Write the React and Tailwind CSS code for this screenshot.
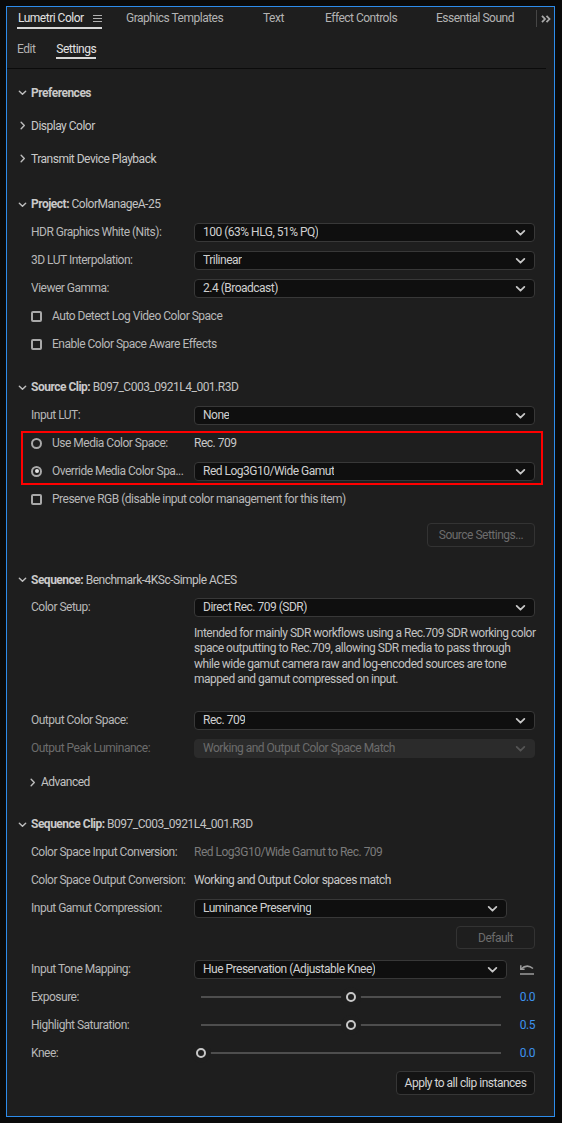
import React from 'react';

const Chevron = ({ dir = 'down', className = '' }) => (
  <svg
    viewBox="0 0 10 10"
    className={className}
    fill="none"
    stroke="currentColor"
    strokeWidth="1.6"
    strokeLinecap="round"
    strokeLinejoin="round"
  >
    {dir === 'down' ? <path d="M1.5 3.5 L5 7 L8.5 3.5" /> : <path d="M3.5 1.5 L7 5 L3.5 8.5" />}
  </svg>
);

function Select({ value, disabled, className = 'flex-1' }) {
  return (
    <div
      className={`${className} flex h-[19px] items-center justify-between rounded-[4px] border pl-[8px] pr-[8px] ${
        disabled ? 'border-[#2b2b2b] bg-[#2b2b2b] text-[#6b6b6b]' : 'border-[#383838] bg-[#0f0f0f] text-[#cfcfcf]'
      }`}
    >
      <span className="truncate">{value}</span>
      <Chevron className={`h-[11px] w-[11px] ${disabled ? 'text-[#555]' : 'text-[#c8c8c8]'}`} />
    </div>
  );
}

function Header({ title, value, open = true, h = 'h-[28px]', className = '' }) {
  return (
    <div className={`flex ${h} items-center ${className}`}>
      <Chevron dir={open ? 'down' : 'right'} className="h-[9px] w-[9px] text-[#bdbdbd]" />
      <span className="ml-[4px] text-[#c9c9c9]">
        <span className={value || open ? 'font-bold' : ''}>{title}</span>
        {value && <span className="text-[#c3c3c3]"> {value}</span>}
      </span>
    </div>
  );
}

function Row({ label, children, dim, h = 'h-[28px]', className = '' }) {
  return (
    <div className={`flex ${h} items-center pl-[13px] ${className}`}>
      <div className={`w-[163px] shrink-0 truncate ${dim ? 'text-[#6c6c6c]' : 'text-[#b8b8b8]'}`}>{label}</div>
      {children}
    </div>
  );
}

function Check({ label }) {
  return (
    <div className="flex h-[28px] items-center pl-[13px]">
      <div className="h-[11px] w-[11px] rounded-[2px] border-2 border-[#a9a9a9]" />
      <span className="ml-[10px] text-[#b8b8b8]">{label}</span>
    </div>
  );
}

function Slider({ label, pos, value }) {
  return (
    <Row label={label}>
      <div className="relative ml-[7px] h-[10px] w-[300px]">
        <div className="absolute left-0 right-0 top-[4px] h-[2px] bg-[#4e4e4e]" />
        <div
          className="absolute top-0 h-[10px] w-[10px] rounded-full border-2 border-[#c8c8c8] bg-[#1e1e1e] shadow-[0_0_0_5px_#1e1e1e]"
          style={{ left: `calc(${pos}% - 5px)` }}
        />
      </div>
      <div className="flex-1 text-right text-[#3d93ee]">{value}</div>
    </Row>
  );
}

export default function App() {
  return (
    <div className="h-[1123px] w-[562px] bg-[#0a0a0a] pl-[6px] pt-[6px] font-['Roboto',sans-serif] text-[12px] leading-[14px] tracking-[-0.5px]">
      <div className="flex h-[1111px] w-[549px] flex-col overflow-hidden border border-[#2d8ceb] bg-[#1e1e1e]">
        {/* panel tabs */}
        <div className="flex items-start pl-[10px] pr-[3px] text-[#b3b3b3]">
          <div className="flex w-[85px] items-center justify-between border-b-2 border-[#d8d8d8] pl-[1px] pt-[4px] pb-[2px] text-[#e2e2e2]">
            <span>Lumetri Color</span>
            <svg viewBox="0 0 9 8" className="h-[8px] w-[9px]" stroke="#b0b0b0" strokeWidth="1">
              <path d="M0 1.5 H9 M0 4.5 H9 M0 7.5 H9" />
            </svg>
          </div>
          <span className="ml-[24px] w-[137px] pt-[4px]">Graphics Templates</span>
          <span className="w-[62px] pt-[4px]">Text</span>
          <span className="w-[111px] pt-[4px]">Effect Controls</span>
          <span className="pt-[4px]">Essential Sound</span>
          <div className="ml-auto mt-[3px] flex items-center">
            <div className="h-[17px] w-px bg-[#464646]" />
            <svg viewBox="0 0 10 8" className="ml-[4px] h-[8px] w-[10px]" fill="none" stroke="#a8a8a8" strokeWidth="1.8">
              <path d="M1 0.8 L4 4 L1 7.2 M5.5 0.8 L8.5 4 L5.5 7.2" />
            </svg>
          </div>
        </div>
        <div className="flex items-start pl-[10px] pt-[13px] text-[#b3b3b3]">
          <span className="pb-[3px]">Edit</span>
          <span className="ml-[21px] border-b-2 border-[#d8d8d8] pb-[1px] text-[#e2e2e2]">Settings</span>
        </div>
        <div className="mr-[8px] mt-[9px] h-px shrink-0 bg-[#0b0b0b]" />

        {/* settings */}
        <div className="flex flex-col pl-[11px] pr-[19px] pt-[7px]">
          <Header title="Preferences" h="h-[33px]" />
          <Header title="Display Color" open={false} h="h-[33px]" />
          <Header title="Transmit Device Playback" open={false} h="h-[33px]" />

          <Header title="Project:" value="ColorManageA-25" className="mt-[15px]" />
          <Row label="HDR Graphics White (Nits):">
            <Select value="100 (63% HLG, 51% PQ)" />
          </Row>
          <Row label="3D LUT Interpolation:">
            <Select value="Trilinear" />
          </Row>
          <Row label="Viewer Gamma:">
            <Select value="2.4 (Broadcast)" />
          </Row>
          <Check label="Auto Detect Log Video Color Space" />
          <Check label="Enable Color Space Aware Effects" />

          <Header title="Source Clip:" value="B097_C003_0921L4_001.R3D" className="mt-[15px]" />
          <Row label="Input LUT:">
            <Select value="None" />
          </Row>
          <div className="ml-[3px] mr-[-8px] mt-[2px] border-2 border-[#ff0000] pl-[8px] pr-[6px]">
            <div className="flex h-[20px] items-center">
              <div className="h-[11px] w-[11px] rounded-full border-2 border-[#a9a9a9]" />
              <span className="ml-[10px] w-[142px] truncate text-[#b8b8b8]">Use Media Color Space:</span>
              <span className="text-[#c8c8c8]">Rec. 709</span>
            </div>
            <div className="flex h-[30px] items-center pt-[6px]">
              <div className="flex h-[11px] w-[11px] items-center justify-center rounded-full border-2 border-[#a9a9a9]">
                <div className="h-[4px] w-[4px] rounded-full bg-[#e4e4e4]" />
              </div>
              <span className="ml-[10px] w-[142px] whitespace-nowrap text-[#b8b8b8]">Override Media Color Spa...</span>
              <Select value="Red Log3G10/Wide Gamut" />
            </div>
          </div>
          <Check label="Preserve RGB (disable input color management for this item)" />
          <div className="mt-[10px] flex justify-end">
            <div className="flex h-[24px] w-[108px] items-center justify-center rounded-[4px] border border-[#333] text-[#6c6c6c]">
              Source Settings...
            </div>
          </div>

          <Header title="Sequence:" value="Benchmark-4KSc-Simple ACES" h="h-[27px]" className="mt-[19px]" />
          <Row label="Color Setup:">
            <Select value="Direct Rec. 709 (SDR)" />
          </Row>
          <div className="ml-[176px] mt-[5px] whitespace-nowrap leading-[15.3px] text-[#c2c2c2]">
            Intended for mainly SDR workflows using a Rec.709 SDR working color
            <br />
            space outputting to Rec.709, allowing SDR media to pass through
            <br />
            while wide gamut camera raw and log-encoded sources are tone
            <br />
            mapped and gamut compressed on input.
          </div>
          <Row label="Output Color Space:" className="mt-[19px]">
            <Select value="Rec. 709" />
          </Row>
          <Row label="Output Peak Luminance:" dim>
            <Select value="Working and Output Color Space Match" disabled />
          </Row>
          <div className="mt-[6px] flex h-[28px] items-center pl-[10px]">
            <Chevron dir="right" className="h-[9px] w-[9px] text-[#bdbdbd]" />
            <span className="ml-[4px] text-[#c3c3c3]">Advanced</span>
          </div>

          <Header title="Sequence Clip:" value="B097_C003_0921L4_001.R3D" className="mt-[14px]" />
          <Row label="Color Space Input Conversion:">
            <span className="text-[#7b7b7b]">Red Log3G10/Wide Gamut to Rec. 709</span>
          </Row>
          <Row label="Color Space Output Conversion:">
            <span className="text-[#c8c8c8]">Working and Output Color spaces match</span>
          </Row>
          <Row label="Input Gamut Compression:">
            <Select value="Luminance Preserving" className="w-[313px]" />
          </Row>
          <div className="mt-[4px] flex justify-end">
            <div className="flex h-[23px] w-[79px] items-center justify-center rounded-[4px] border border-[#333] text-[#6c6c6c]">
              Default
            </div>
          </div>
          <Row label="Input Tone Mapping:" className="mt-[6px]">
            <Select value="Hue Preservation (Adjustable Knee)" className="w-[313px]" />
            <svg viewBox="0 0 16 12" className="ml-auto h-[12px] w-[16px]" fill="none" stroke="#9c9c9c" strokeWidth="1.5">
              <path d="M2 6 Q8 0.5 14 5.5" />
              <path d="M1.8 2.2 V6.2 H5.6" />
              <path d="M1 11 H15" />
            </svg>
          </Row>
          <Slider label="Exposure:" pos={50} value="0.0" />
          <Slider label="Highlight Saturation:" pos={50} value="0.5" />
          <Slider label="Knee:" pos={0} value="0.0" />
          <div className="mt-[4px] flex justify-end">
            <div className="flex h-[24px] w-[139px] items-center justify-center rounded-[4px] border border-[#363636] bg-[#141414] text-[#d4d4d4]">
              Apply to all clip instances
            </div>
          </div>
        </div>
      </div>
    </div>
  );
}
